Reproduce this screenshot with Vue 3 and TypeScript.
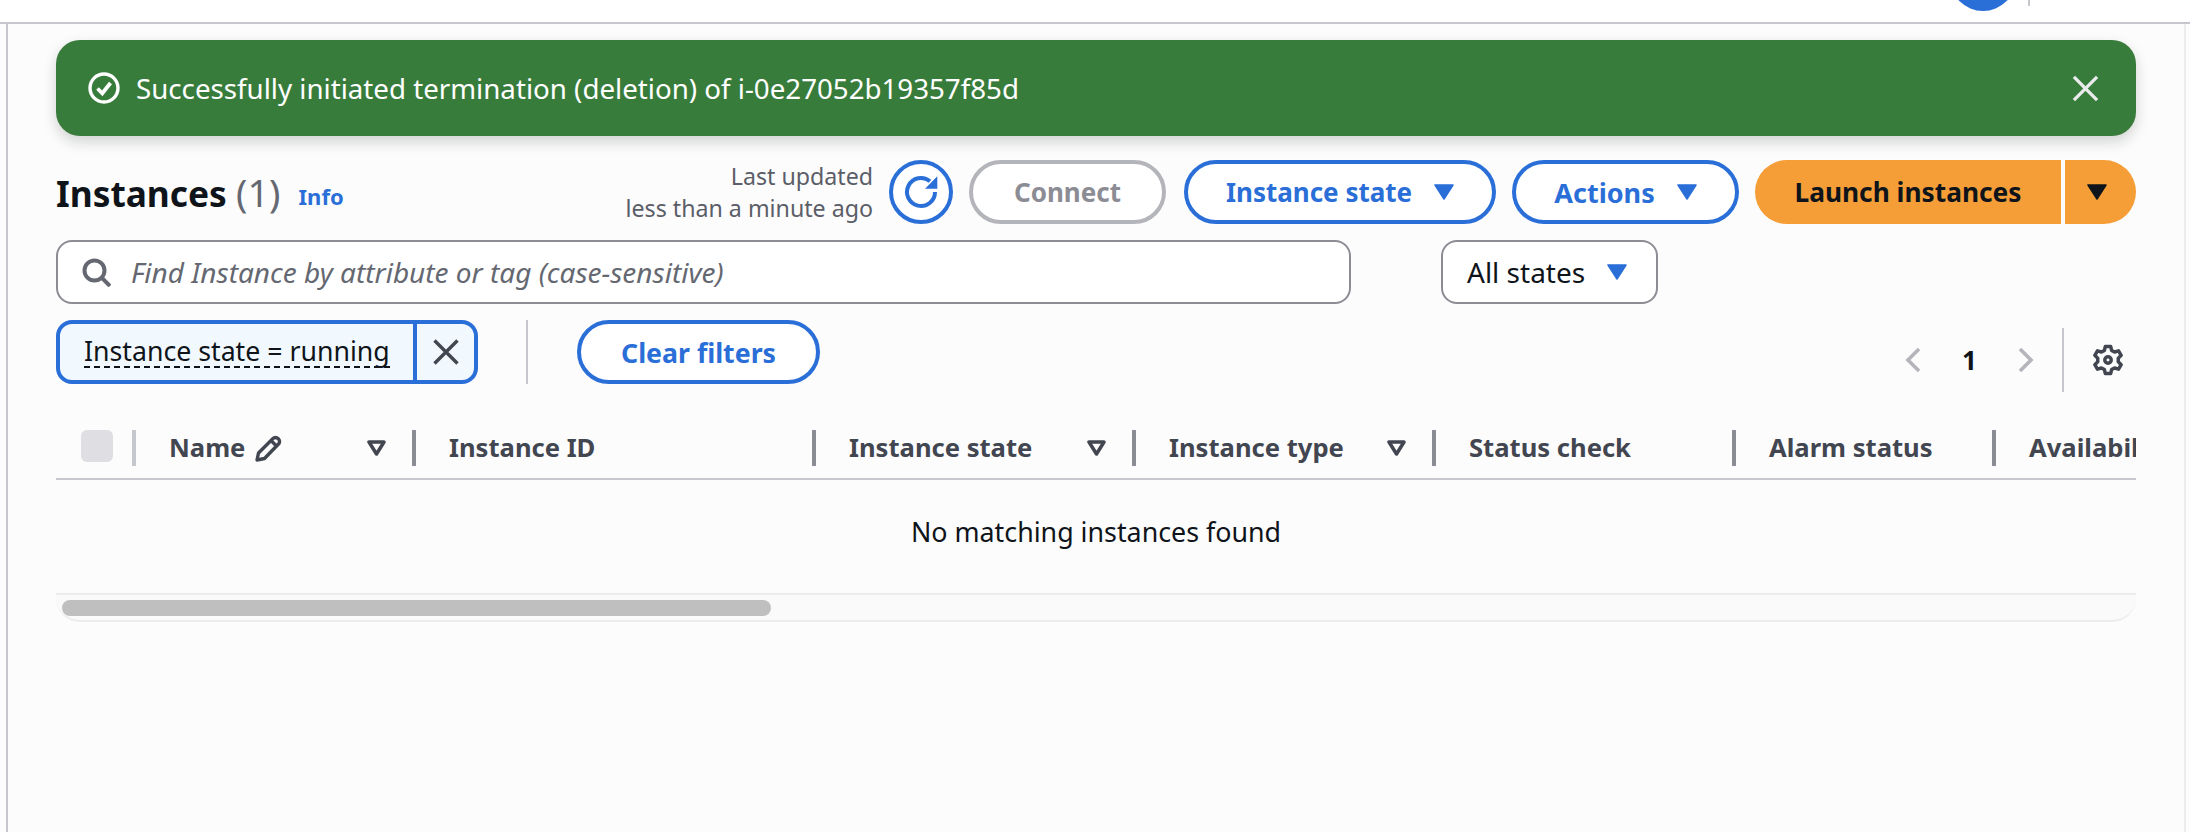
<template>
  <div class="page">
    <header class="top-bar">
      <span class="avatar"></span>
      <span class="top-sep"></span>
    </header>

    <main class="content">
      <!-- Flash message -->
      <div class="flash">
        <svg class="flash-icon" viewBox="0 0 32 32" fill="none" stroke="#fff" stroke-width="3.4">
          <circle cx="16" cy="16" r="14" />
          <path d="M9.500 16.500l4.800 4.800L22.500 11" stroke-width="3.800" />
        </svg>
        <span class="flash-text">Successfully initiated termination (deletion) of i-0e27052b19357f85d</span>
        <svg class="flash-close" viewBox="0 0 28 28" fill="none" stroke="#e9ebed" stroke-width="3.400">
          <path d="M2 2l24 24M26 2L2 26" />
        </svg>
      </div>

      <!-- Title and actions -->
      <div class="title-row">
        <h1 class="title">Instances <span class="count">(1)</span></h1>
        <a class="info">Info</a>
        <div class="title-actions">
          <div class="updated">
            <span>Last updated</span>
            <span>less than a minute ago</span>
          </div>
          <button class="btn refresh" aria-label="Refresh">
            <svg viewBox="-18 -18 36 36" fill="none" stroke="#2a6ed8" stroke-width="4">
              <path d="M14 0A14 14 0 1 1 9 -10.700" />
              <path d="M16.300 -15.700V-3.300H4z" fill="#2a6ed8" stroke="none" />
            </svg>
          </button>
          <button class="btn connect">Connect</button>
          <button class="btn state-btn">
            Instance state
            <svg class="caret" viewBox="0 0 20 16"><path d="M1 1h18L10 15z" /></svg>
          </button>
          <button class="btn actions-btn">
            Actions
            <svg class="caret" viewBox="0 0 20 16"><path d="M1 1h18L10 15z" /></svg>
          </button>
          <div class="launch">
            <button class="launch-main">Launch instances</button>
            <button class="launch-arrow" aria-label="More">
              <svg class="caret dark" viewBox="0 0 20 16"><path d="M1 1h18L10 15z" /></svg>
            </button>
          </div>
        </div>
      </div>

      <!-- Search -->
      <div class="search-row">
        <div class="search">
          <svg viewBox="0 0 29 29" fill="none" stroke="#656871" stroke-width="4">
            <circle cx="12.500" cy="12.500" r="10" />
            <path d="M19.500 19.500L28 28" />
          </svg>
          <span class="placeholder">Find Instance by attribute or tag (case-sensitive)</span>
        </div>
        <div class="states">
          All states
          <svg class="caret" viewBox="0 0 20 16"><path d="M1 1h18L10 15z" /></svg>
        </div>
      </div>

      <!-- Filters and pagination -->
      <div class="filter-row">
        <div class="chip">
          <span class="chip-label"><span>Instance state = running</span></span>
          <button class="chip-x" aria-label="Remove">
            <svg viewBox="0 0 26 26" fill="none" stroke="#424650" stroke-width="3.400">
              <path d="M1.500 1.500l23 23M24.500 1.500l-23 23" />
            </svg>
          </button>
        </div>
        <span class="filter-sep"></span>
        <button class="btn clear">Clear filters</button>
        <div class="pager">
          <svg class="chev" viewBox="0 0 16 26" fill="none" stroke="#b4b4bb" stroke-width="3.600">
            <path d="M14 2L3 13l11 11" />
          </svg>
          <span class="page-num">1</span>
          <svg class="chev" viewBox="0 0 16 26" fill="none" stroke="#b4b4bb" stroke-width="3.600">
            <path d="M2 2l11 11L2 24" />
          </svg>
          <span class="pager-sep"></span>
          <svg class="gear" viewBox="0 0 24 24" fill="none" stroke="#424650" stroke-width="2.600" stroke-linejoin="round">
            <path d="M10 1.800h4l.7 3 2.200 1.200 3-.9 2 3.400-2.200 2.100v2.800l2.200 2.100-2 3.400-3-.9-2.200 1.200-.7 3h-4l-.7-3-2.200-1.200-3 .9-2-3.400 2.200-2.100v-2.800L2.100 8.500l2-3.400 3 .9L9.300 4.800z" />
            <circle cx="12" cy="12" r="2.400" />
          </svg>
        </div>
      </div>

      <!-- Table -->
      <div class="table-wrap">
        <div class="thead">
          <div class="th check-cell"><span class="checkbox"></span></div>
          <div v-for="col in columns" :key="col.label" class="th" :style="{ width: col.width + 'px' }">
            <span class="th-label">{{ col.label }}</span>
            <svg v-if="col.edit" class="pencil" viewBox="0 0 28 28" fill="none" stroke="#424650" stroke-width="3.400" stroke-linejoin="round">
              <path d="M2 26l1.500-7L18 4.500a3.500 3.500 0 0 1 5 0l.5.5a3.500 3.500 0 0 1 0 5L9.500 24.500z" />
              <path d="M16 6.500l5.500 5.500" />
            </svg>
            <svg v-if="col.sort" class="sort" viewBox="0 0 19 16" fill="none" stroke="#424650" stroke-width="3.500" stroke-linejoin="round">
              <path d="M2 2h15L9.500 14z" />
            </svg>
          </div>
        </div>
        <div class="empty">No matching instances found</div>
        <div class="scroll-track"><div class="scroll-thumb"></div></div>
      </div>
    </main>
  </div>
</template>

<script setup lang="ts">
interface Column {
  label: string
  width: number
  sort?: boolean
  edit?: boolean
}

const columns: Column[] = [
  { label: 'Name', width: 280, sort: true, edit: true },
  { label: 'Instance ID', width: 400 },
  { label: 'Instance state', width: 320, sort: true },
  { label: 'Instance type', width: 300, sort: true },
  { label: 'Status check', width: 300 },
  { label: 'Alarm status', width: 260 },
  { label: 'Availability Zone', width: 260 },
]
</script>

<style>
html,
body {
  margin: 0;
  background: #fcfcfc;
}
</style>

<style scoped>
.page {
  height: 832px;
  width: 2190px;
  overflow: hidden;
  font-family: "Noto Sans", sans-serif;
  color: #0f141a;
  background: #fcfcfc;
}

.top-bar {
  height: 22px;
  background: #fff;
  border-bottom: 2px solid #c6c6cd;
  position: relative;
  overflow: hidden;
}

.avatar {
  position: absolute;
  left: 1950px;
  top: -55px;
  width: 66px;
  height: 66px;
  border-radius: 50%;
  background: #2a6ed8;
}

.top-sep {
  position: absolute;
  left: 2028px;
  top: 0;
  width: 2px;
  height: 6px;
  background: #c6c6cd;
}

.content {
  margin-left: 6px;
  margin-right: 4px;
  height: 808px;
  padding: 16px 48px 0 48px;
  box-sizing: border-box;
  border-left: 2px solid #c6c6cd;
  border-right: 2px solid #ececef;
}

button {
  font-family: inherit;
}

.flash {
  height: 96px;
  border-radius: 24px;
  background: #387c3b;
  box-shadow: 0 6px 14px rgba(15, 20, 26, 0.18);
  display: flex;
  align-items: center;
  padding: 0 37px 0 32px;
  color: #fff;
}

.flash-icon {
  width: 32px;
  height: 32px;
  flex: none;
}

.flash-text {
  margin-left: 16px;
  font-size: 27.700px;
  flex: 1;
}

.flash-close {
  width: 27px;
  height: 27px;
}

.title-row {
  display: flex;
  align-items: center;
  margin-top: 24px;
  height: 64px;
}

.title {
  margin: 0;
  font-size: 35.300px;
  font-weight: 700;
}

.count {
  font-size: 38px;
  font-weight: 400;
  color: #656871;
}

.info {
  margin-left: 18px;
  margin-top: 8px;
  font-size: 22px;
  font-weight: 700;
  color: #2a6ed8;
}

.title-actions {
  margin-left: auto;
  display: flex;
  align-items: center;
  gap: 16px;
}

.updated {
  display: flex;
  flex-direction: column;
  align-items: flex-end;
  font-size: 23.200px;
  line-height: 32px;
  color: #5b5e68;
}

.btn {
  height: 64px;
  box-sizing: border-box;
  border: 4px solid #2a6ed8;
  border-radius: 32px;
  background: #fff;
  color: #2a6ed8;
  font-size: 26px;
  font-weight: 700;
  display: flex;
  align-items: center;
  justify-content: center;
  padding: 0;
}

.refresh {
  width: 64px;
}

.refresh svg {
  width: 36px;
  height: 36px;
}

.connect {
  width: 197px;
  margin-right: 2px;
  border-color: #b4b4bb;
  color: #8c8c94;
}

.state-btn {
  width: 312px;
  gap: 22px;
}

.actions-btn {
  width: 227px;
  gap: 22px;
  font-size: 27px;
}

.caret {
  display: block;
  flex: none;
  width: 20px;
  height: 16px;
  fill: #2a6ed8;
  stroke: #2a6ed8;
  stroke-width: 1.500;
  stroke-linejoin: round;
}

.caret.dark {
  fill: #0f141a;
  stroke: #0f141a;
}

.launch {
  display: flex;
  height: 64px;
  gap: 4px;
}

.launch-main,
.launch-arrow {
  border: 0;
  background: #f59e38;
  color: #0f141a;
  font-size: 26.300px;
  font-weight: 700;
  padding: 0;
}

.launch-main {
  width: 306px;
  border-radius: 32px 0 0 32px;
}

.launch-arrow {
  width: 71px;
  border-radius: 0 32px 32px 0;
  display: flex;
  align-items: center;
  justify-content: center;
  padding-right: 7px;
  box-sizing: border-box;
}

.search-row {
  display: flex;
  margin-top: 16px;
  height: 64px;
  gap: 90px;
}

.search {
  width: 1295px;
  box-sizing: border-box;
  border: 2px solid #8c8c94;
  border-radius: 16px;
  background: #fff;
  display: flex;
  align-items: center;
  padding-left: 24px;
  gap: 20px;
}

.search svg {
  width: 29px;
  height: 29px;
  flex: none;
}

.placeholder {
  font-size: 28px;
  font-style: italic;
  color: #656871;
}

.states {
  width: 217px;
  box-sizing: border-box;
  border: 2px solid #8c8c94;
  border-radius: 16px;
  background: #fff;
  display: flex;
  align-items: center;
  padding-left: 24px;
  gap: 22px;
  font-size: 28px;
}

.filter-row {
  display: flex;
  align-items: flex-start;
  margin-top: 16px;
  height: 64px;
}

.chip {
  width: 422px;
  height: 64px;
  box-sizing: border-box;
  border: 4px solid #2a6ed8;
  border-radius: 16px;
  background: #f1f9ff;
  display: flex;
  overflow: hidden;
}

.chip-label {
  flex: 1;
  display: flex;
  align-items: center;
  padding-left: 24px;
  font-size: 26.700px;
  border-right: 4px solid #2a6ed8;
}

.chip-label span {
  border-bottom: 2px dashed #0f141a;
  line-height: 30px;
  white-space: nowrap;
}

.chip-x {
  flex: none;
  width: 57px;
  border: 0;
  background: transparent;
  display: flex;
  align-items: center;
  justify-content: center;
  padding: 0;
}

.chip-x svg {
  width: 26px;
  height: 26px;
}

.filter-sep {
  width: 2px;
  height: 64px;
  margin: 0 49px 0 48px;
  background: #c6c6cd;
}

.clear {
  width: 243px;
  font-size: 26.700px;
}

.pager {
  margin-left: auto;
  margin-right: 12px;
  margin-top: 8px;
  height: 64px;
  display: flex;
  align-items: center;
}

.chev {
  width: 16px;
  height: 26px;
}

.page-num {
  width: 97px;
  text-align: center;
  font-size: 26px;
  font-weight: 700;
}

.pager-sep {
  width: 2px;
  height: 64px;
  background: #c6c6cd;
  margin: 0 28px;
}

.gear {
  width: 32px;
  height: 32px;
}

.table-wrap {
  margin-top: 46px;
  overflow: hidden;
}

.thead {
  display: flex;
  height: 48px;
  border-bottom: 2px solid #c6c6cd;
}

.th {
  flex: none;
  box-sizing: border-box;
  height: 36px;
  display: flex;
  align-items: center;
  font-size: 25.600px;
  font-weight: 700;
  color: #424650;
  padding: 0 26px 0 33px;
  border-right: 4px solid #8c8c94;
  white-space: nowrap;
}

.th-label {
  margin-top: -2px;
}

.check-cell {
  width: 80px;
  border-right-color: #c6c6cd;
  padding: 0 0 0 25px;
  align-items: flex-start;
}

.checkbox {
  width: 32px;
  height: 32px;
  border-radius: 6px;
  background: #dedee3;
}

.pencil {
  width: 28px;
  height: 28px;
  margin-left: 10px;
}

.sort {
  width: 19px;
  height: 16px;
  margin-left: auto;
  flex: none;
}

.empty {
  height: 113px;
  padding-top: 34px;
  box-sizing: border-box;
  text-align: center;
  font-size: 26.800px;
  line-height: 36px;
}

.scroll-track {
  height: 29px;
  box-sizing: border-box;
  border-top: 2px solid #ececef;
  border-bottom: 2px solid #ececef;
  border-radius: 0 0 24px 24px;
  background: #fafafa;
  padding: 5px 0 0 6px;
}

.scroll-thumb {
  width: 709px;
  height: 16px;
  border-radius: 8px;
  background: #bfbfbf;
}
</style>
